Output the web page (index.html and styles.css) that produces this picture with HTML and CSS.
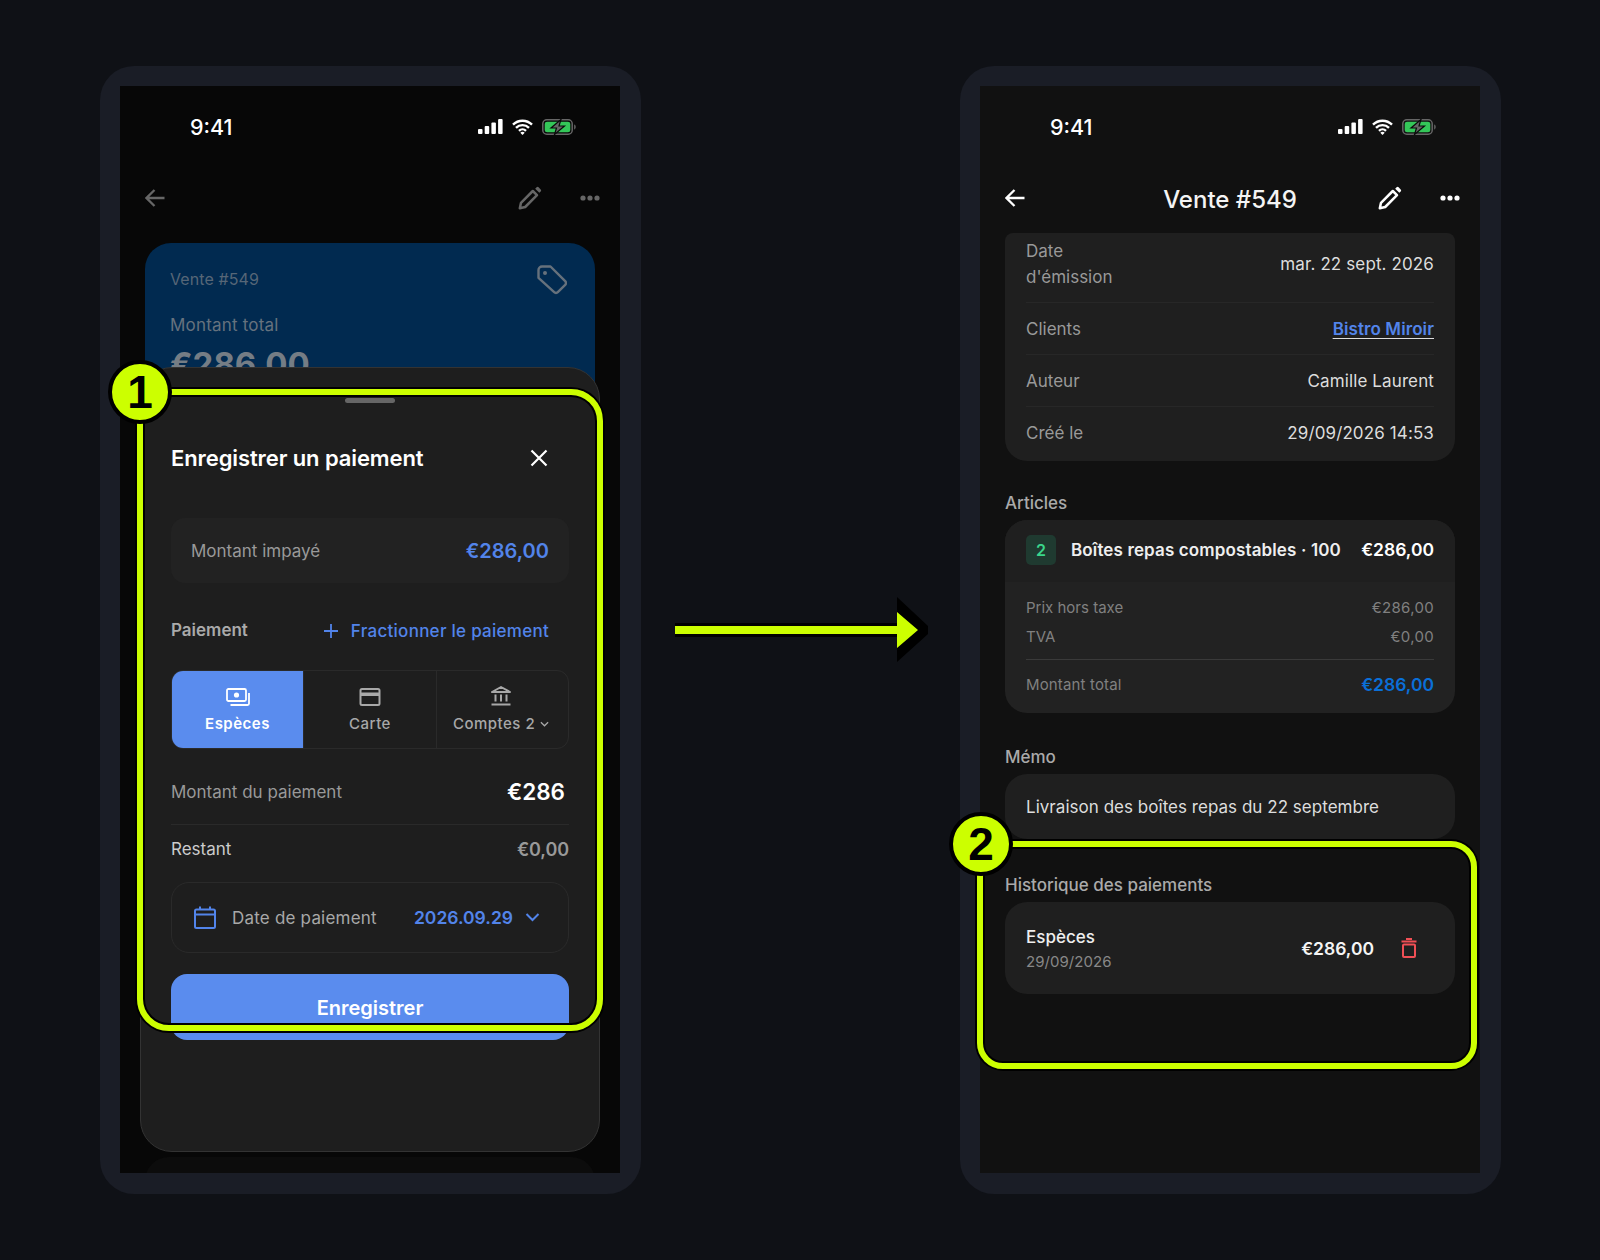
FILE: index.html
```html
<!DOCTYPE html>
<html lang="fr">
<head>
    <meta charset="UTF-8">
    <meta name="viewport" content="width=device-width, initial-scale=1.0">
    <title>Enregistrer un paiement</title>
    <link rel="stylesheet" href="styles.css">
</head>
<body>
    <svg class="defs" width="0" height="0">
        <symbol id="i-signal" viewBox="0 0 25 15">
            <rect x="0" y="10" width="4.5" height="5" rx="1" fill="currentColor"/>
            <rect x="6.7" y="7" width="4.5" height="8" rx="1" fill="currentColor"/>
            <rect x="13.4" y="3.5" width="4.5" height="11.5" rx="1" fill="currentColor"/>
            <rect x="20.1" y="0" width="4.5" height="15" rx="1" fill="currentColor"/>
        </symbol>
        <symbol id="i-wifi" viewBox="0 0 21 16">
            <path d="M1 5.600a13.500 13.500 0 0 1 19 0M4 8.800a9.200 9.200 0 0 1 13 0M7 11.800a5 5 0 0 1 7 0" fill="none" stroke="currentColor" stroke-width="2.400"/>
            <path d="M10.500 16l-2.200-2.200a3.100 3.100 0 0 1 4.400 0z" fill="currentColor"/>
        </symbol>
        <symbol id="i-battery" viewBox="0 0 34 16">
            <rect x="0.8" y="0.8" width="29.400" height="14.400" rx="4" fill="none" stroke="#666" stroke-width="1.500"/>
            <rect x="2.700" y="2.700" width="25.600" height="10.600" rx="2.400" fill="#34c759"/>
            <path d="M32 5.500c1.200.3 1.800 1.200 1.800 2.500s-.6 2.200-1.800 2.500z" fill="#555"/>
            <path d="M19 0.500L9 9h5.500l-2 6.500L22.500 7H17z" fill="#666" stroke="#0a0a0a" stroke-width="1.200"/>
        </symbol>
        <symbol id="i-back" viewBox="0 0 20 18">
            <path d="M19.500 9H1.500M9.500 1L1.500 9l8 8" fill="none" stroke="currentColor" stroke-width="2.300"/>
        </symbol>
        <symbol id="i-pencil" viewBox="0 0 24 24">
            <path d="M1.800 22.200l1.200-5.400L14.800 5l4.200 4.200L7.200 21z" fill="none" stroke="currentColor" stroke-width="2.500" stroke-linejoin="round"/>
            <path d="M17.200 2.700l1.400-1.400a1.400 1.400 0 0 1 2 0l2.100 2.100a1.400 1.400 0 0 1 0 2l-1.400 1.400z" fill="currentColor"/>
        </symbol>
        <symbol id="i-dots" viewBox="0 0 20 6">
            <circle cx="3" cy="3" r="2.600" fill="currentColor"/>
            <circle cx="10" cy="3" r="2.600" fill="currentColor"/>
            <circle cx="17" cy="3" r="2.600" fill="currentColor"/>
        </symbol>
    </svg>

    <div class="page">
        <section class="phone">
            <div class="screen screen-dim">
                <div class="status">
                    <span class="time">9:41</span>
                    <div class="status-icons">
                        <svg class="ic-signal"><use href="#i-signal"/></svg>
                        <svg class="ic-wifi"><use href="#i-wifi"/></svg>
                        <svg class="ic-battery"><use href="#i-battery"/></svg>
                    </div>
                </div>
                <div class="nav nav-dim">
                    <svg class="ic-back"><use href="#i-back"/></svg>
                    <span></span>
                    <div class="nav-actions">
                        <svg class="ic-pencil"><use href="#i-pencil"/></svg>
                        <svg class="ic-dots"><use href="#i-dots"/></svg>
                    </div>
                </div>
                <div class="sale-card">
                    <div class="sale-top">
                        <span class="sale-no">Vente #549</span>
                        <svg class="ic-tag" viewBox="0 0 30 30">
                            <path d="M1.500 5a3.500 3.500 0 0 1 3.500-3.500h8.500l14.700 14.700a2.500 2.500 0 0 1 0 3.600l-7.400 7.400a2.500 2.500 0 0 1-3.600 0L1.500 12.800z" fill="none" stroke="currentColor" stroke-width="2.400" stroke-linejoin="round"/>
                            <circle cx="8" cy="8" r="2" fill="currentColor"/>
                        </svg>
                    </div>
                    <div class="sale-label">Montant total</div>
                    <div class="sale-total">€286,00</div>
                </div>
                <div class="under-card"></div>

                <div class="sheet">
                    <div class="handle"></div>
                    <div class="sheet-head">
                        <h2>Enregistrer un paiement</h2>
                        <svg class="ic-close" viewBox="0 0 18 18">
                            <path d="M1.500 1.500l15 15M16.500 1.500l-15 15" fill="none" stroke="currentColor" stroke-width="2.200"/>
                        </svg>
                    </div>
                    <div class="due">
                        <span>Montant impayé</span>
                        <strong>€286,00</strong>
                    </div>
                    <div class="pay-head">
                        <span class="pay-title">Paiement</span>
                        <span class="split">
                            <svg class="ic-plus" viewBox="0 0 14 14">
                                <path d="M7 0v14M0 7h14" fill="none" stroke="currentColor" stroke-width="1.800"/>
                            </svg>
                            Fractionner le paiement
                        </span>
                    </div>
                    <div class="methods">
                        <div class="method active">
                            <svg class="ic-method" viewBox="0 0 24 18">
                                <rect x="1" y="1" width="19" height="12" rx="1.500" fill="none" stroke="currentColor" stroke-width="1.800"/>
                                <circle cx="10.500" cy="7" r="2.600" fill="currentColor"/>
                                <path d="M23 5v10.500a1.500 1.500 0 0 1-1.500 1.500H4.500" fill="none" stroke="currentColor" stroke-width="1.800"/>
                            </svg>
                            <span>Espèces</span>
                        </div>
                        <div class="method">
                            <svg class="ic-method" viewBox="0 0 24 18">
                                <rect x="2.500" y="1" width="19" height="16" rx="1.500" fill="none" stroke="currentColor" stroke-width="2"/>
                                <rect x="2.500" y="4.500" width="19" height="3.500" fill="currentColor"/>
                            </svg>
                            <span>Carte</span>
                        </div>
                        <div class="method method-more">
                            <svg class="ic-method ic-bank" viewBox="0 -2 24 20">
                                <path d="M12 -1L3 4h18z" fill="none" stroke="currentColor" stroke-width="2" stroke-linejoin="round"/>
                                <path d="M6.500 6.500v7M12 6.500v7M17.500 6.500v7" fill="none" stroke="currentColor" stroke-width="2"/>
                                <path d="M2.500 16.500h19" fill="none" stroke="currentColor" stroke-width="2.200"/>
                            </svg>
                            <span>Comptes 2
                                <svg class="ic-mini" viewBox="0 0 10 6">
                                    <path d="M1 1l4 4 4-4" fill="none" stroke="currentColor" stroke-width="1.400"/>
                                </svg>
                            </span>
                        </div>
                    </div>
                    <div class="amount-row">
                        <span>Montant du paiement</span>
                        <strong>€286</strong>
                    </div>
                    <div class="rest-row">
                        <span>Restant</span>
                        <strong>€0,00</strong>
                    </div>
                    <div class="date-box">
                        <svg class="ic-cal" viewBox="0 0 22 23">
                            <path d="M2.500 3.500h17a1.500 1.500 0 0 1 1.500 1.500v15.500a1.500 1.500 0 0 1-1.500 1.500h-17A1.500 1.500 0 0 1 1 20.500V5a1.500 1.500 0 0 1 1.500-1.500zM1 8.500h20M6 0.500v3M16 0.500v3" fill="none" stroke="currentColor" stroke-width="2"/>
                        </svg>
                        <span class="date-label">Date de paiement</span>
                        <span class="date-value">2026.09.29</span>
                        <svg class="ic-chev" viewBox="0 0 14 9">
                            <path d="M1 1l6 6 6-6" fill="none" stroke="currentColor" stroke-width="2"/>
                        </svg>
                    </div>
                    <button class="save">Enregistrer</button>
                </div>
            </div>
        </section>

        <section class="phone">
            <div class="screen">
                <div class="status">
                    <span class="time">9:41</span>
                    <div class="status-icons">
                        <svg class="ic-signal"><use href="#i-signal"/></svg>
                        <svg class="ic-wifi"><use href="#i-wifi"/></svg>
                        <svg class="ic-battery"><use href="#i-battery"/></svg>
                    </div>
                </div>
                <div class="nav">
                    <svg class="ic-back"><use href="#i-back"/></svg>
                    <span class="nav-title">Vente #549</span>
                    <div class="nav-actions">
                        <svg class="ic-pencil"><use href="#i-pencil"/></svg>
                        <svg class="ic-dots"><use href="#i-dots"/></svg>
                    </div>
                </div>
                <div class="detail">
                    <div class="card info">
                        <div class="info-row first">
                            <span>Date<br>d'émission</span>
                            <em>mar. 22 sept. 2026</em>
                        </div>
                        <div class="info-row">
                            <span>Clients</span>
                            <a class="client">Bistro Miroir</a>
                        </div>
                        <div class="info-row">
                            <span>Auteur</span>
                            <em>Camille Laurent</em>
                        </div>
                        <div class="info-row">
                            <span>Créé le</span>
                            <em>29/09/2026 14:53</em>
                        </div>
                    </div>

                    <h3 class="section-title articles-title">Articles</h3>
                    <div class="card items">
                        <div class="item">
                            <span class="qty">2</span>
                            <span class="item-name">Boîtes repas compostables · 100</span>
                            <strong>€286,00</strong>
                        </div>
                        <div class="totals">
                            <div class="total-row"><span>Prix hors taxe</span><span class="num">€286,00</span></div>
                            <div class="total-row"><span>TVA</span><span class="num">€0,00</span></div>
                            <div class="grand-row"><span>Montant total</span><strong>€286,00</strong></div>
                        </div>
                    </div>

                    <h3 class="section-title memo-title">Mémo</h3>
                    <div class="card memo">Livraison des boîtes repas du 22 septembre</div>

                    <h3 class="section-title history-title">Historique des paiements</h3>
                    <div class="card history">
                        <div class="history-info">
                            <div class="history-name">Espèces</div>
                            <div class="history-date">29/09/2026</div>
                        </div>
                        <strong>€286,00</strong>
                        <svg class="ic-trash" viewBox="0 0 16 20">
                            <path d="M0.500 3.500h15M5 1h6" fill="none" stroke="currentColor" stroke-width="2"/>
                            <rect x="2" y="6.500" width="12" height="12.500" rx="1" fill="none" stroke="currentColor" stroke-width="2"/>
                        </svg>
                    </div>
                </div>
            </div>
        </section>

        <!-- annotations over the two phones -->
        <div class="frame-mark mark-one"></div>
        <div class="frame-mark mark-two"></div>
        <div class="step step-one">1</div>
        <div class="step step-two">2</div>
        <svg class="flow-arrow" viewBox="0 0 265 80" width="265" height="80">
            <path d="M5 33H227V7L258 36V44L227 72V47H5z" fill="#000"/>
            <path d="M5 36H227V22L248 40 227 58V44H5z" fill="#ccff00"/>
        </svg>
    </div>
</body>
</html>
```

FILE: styles.css
```css
* {
    box-sizing: border-box;
}
body {
    margin: 0;
    background: #0f1116;
    font-family: Inter, "Liberation Sans", sans-serif;
    color: #ddd;
}
h2, h3 {
    margin: 0;
}
em {
    font-style: normal;
}
.defs {
    position: absolute;
}
svg {
    display: block;
}
.page {
    position: relative;
    width: 1600px;
    height: 1260px;
    padding: 66px 0 0 100px;
    display: flex;
    gap: 319px;
}
.phone {
    width: 541px;
    height: 1128px;
    padding: 20px 21px 21px 20px;
    background: #1a1d26;
    border-radius: 34px;
}
.screen {
    position: relative;
    height: 100%;
    background: #111;
    overflow: hidden;
    display: flex;
    flex-direction: column;
}
.screen-dim {
    background: #070707;
}

/* status bar */
.status {
    height: 81px;
    flex-shrink: 0;
    display: flex;
    align-items: center;
    justify-content: space-between;
    padding: 0 44px 0 70px;
}
.time {
    font-size: 21.5px;
    font-weight: 500;
    color: #fff;
}
.status-icons {
    display: flex;
    align-items: center;
    gap: 9px;
    color: #fff;
}
.ic-signal {
    width: 25px;
    height: 15px;
}
.ic-wifi {
    width: 21px;
    height: 16px;
}
.ic-battery {
    width: 34px;
    height: 16px;
}

/* nav */
.nav {
    height: 62px;
    flex-shrink: 0;
    display: grid;
    grid-template-columns: 1fr auto 1fr;
    align-items: center;
    padding: 0 20px;
    color: #fff;
}
.nav-dim {
    color: #666;
}
.ic-back {
    width: 20px;
    height: 18px;
    margin-left: 5px;
}
.nav-title {
    padding-top: 2px;
    font-size: 24px;
    font-weight: 500;
    color: #f4f4f4;
}
.nav-actions {
    display: flex;
    align-items: center;
    justify-content: flex-end;
    gap: 38px;
}
.ic-pencil {
    width: 24px;
    height: 24px;
}
.ic-dots {
    width: 20px;
    height: 6px;
}

/* left phone, behind the sheet */
.sale-card {
    height: 300px;
    margin: 14px 25px 0;
    padding: 21px 25px;
    background: #012a50;
    border-radius: 26px;
}
.sale-top {
    display: flex;
    align-items: center;
    justify-content: space-between;
    height: 30px;
    padding-right: 3px;
    color: #66717c;
}
.sale-no {
    font-size: 16px;
    letter-spacing: 0.1px;
    color: #566677;
}
.ic-tag {
    width: 30px;
    height: 30px;
    margin-top: 1px;
}
.sale-label {
    margin-top: 21px;
    font-size: 17px;
    letter-spacing: 0.2px;
    color: #66727e;
}
.sale-total {
    margin-top: 9px;
    font-size: 33px;
    font-weight: 700;
    color: #757d85;
}
.under-card {
    height: 60px;
    margin: auto 25px -44px;
    background: #0c0c0c;
    border-radius: 24px;
}
.sheet {
    position: absolute;
    left: 20px;
    top: 281px;
    width: 460px;
    height: 785px;
    padding: 0 30px;
    background: #1e1e1e;
    border: 1px solid #333;
    border-radius: 32px;
}
.handle {
    width: 50px;
    height: 5px;
    margin: 30px auto 0;
    background: #666;
    border-radius: 3px;
}
.sheet-head {
    height: 30px;
    margin-top: 40px;
    display: flex;
    align-items: center;
    justify-content: space-between;
    padding-right: 21px;
    color: #fff;
}
.sheet-head h2 {
    font-size: 22px;
    font-weight: 600;
    letter-spacing: -0.1px;
}
.ic-close {
    width: 18px;
    height: 18px;
}
.due {
    height: 65px;
    margin-top: 45px;
    padding: 0 20px;
    display: flex;
    align-items: center;
    justify-content: space-between;
    background: #222;
    border-radius: 14px;
    font-size: 17px;
    color: #999;
}
.due strong {
    font-size: 20px;
    font-weight: 600;
    color: #5284ea;
}
.pay-head {
    height: 25px;
    margin-top: 35px;
    display: flex;
    align-items: center;
    justify-content: space-between;
    padding-right: 20px;
    font-size: 17px;
}
.pay-title {
    margin-top: -2px;
    font-weight: 600;
    color: #aaa;
}
.split {
    display: flex;
    align-items: center;
    gap: 13px;
    font-weight: 500;
    letter-spacing: 0.27px;
    color: #5284ea;
}
.ic-plus {
    width: 14px;
    height: 14px;
}
.methods {
    height: 79px;
    margin-top: 27px;
    display: grid;
    grid-template-columns: 131px 133px 1fr;
    border: 1px solid #2a2a2a;
    border-radius: 12px;
    overflow: hidden;
}
.method {
    display: flex;
    flex-direction: column;
    align-items: center;
    gap: 8px;
    padding-top: 17px;
    font-size: 15px;
    font-weight: 500;
    letter-spacing: 0.5px;
    color: #a8a8a8;
    border-left: 1px solid #2a2a2a;
}
.method span {
    display: flex;
    align-items: center;
    gap: 5px;
}
.method.active {
    background: #5a8cee;
    color: #fff;
    font-weight: 600;
    border-left: 0;
}
.method-more {
    padding-right: 3px;
}
.ic-method {
    width: 24px;
    height: 18px;
}
.ic-bank {
    height: 20px;
    margin-top: -2px;
}
.ic-mini {
    width: 9px;
    height: 6px;
}
.amount-row {
    height: 66px;
    margin-top: 10px;
    display: flex;
    align-items: center;
    justify-content: space-between;
    padding-right: 4px;
    border-bottom: 1px solid #2a2a2a;
    font-size: 17px;
    color: #999;
}
.amount-row strong {
    font-size: 22.5px;
    font-weight: 600;
    color: #fff;
}
.rest-row {
    height: 47px;
    padding-top: 1px;
    display: flex;
    align-items: center;
    justify-content: space-between;
    font-size: 17px;
    color: #ccc;
}
.rest-row strong {
    font-size: 18px;
    font-weight: 600;
    letter-spacing: -0.1px;
    color: #999;
}
.date-box {
    height: 71px;
    margin-top: 10px;
    padding: 0 28px 0 22px;
    display: flex;
    align-items: center;
    border: 1px solid #2a2a2a;
    border-radius: 18px;
    color: #5284ea;
}
.ic-cal {
    width: 22px;
    height: 23px;
}
.date-label {
    margin-left: 16px;
    font-size: 17px;
    letter-spacing: 0.2px;
    color: #a8a8a8;
}
.date-value {
    margin-left: auto;
    font-size: 17.5px;
    font-weight: 600;
}
.ic-chev {
    width: 15px;
    height: 9px;
    margin-left: 12px;
}
.save {
    display: block;
    width: 100%;
    height: 66px;
    margin-top: 21px;
    padding: 2px 0 0;
    border: 0;
    background: #5a8cee;
    border-radius: 16px;
    font-family: inherit;
    font-size: 20px;
    font-weight: 600;
    color: #fff;
}

/* right phone */
.detail {
    padding: 4px 25px 0;
}
.card {
    background: #1f1f1f;
    border-radius: 22px;
}
.info {
    padding: 0 21px;
    border-radius: 8px 8px 22px 22px;
}
.info-row {
    height: 52px;
    display: flex;
    align-items: center;
    justify-content: space-between;
    border-bottom: 1px solid #272727;
    font-size: 17px;
    color: #999;
}
.info-row:last-child {
    height: 54px;
    padding-bottom: 2px;
    border-bottom: 0;
}
.info-row.first {
    height: 70px;
    padding-bottom: 8px;
    line-height: 26px;
}
.info-row em {
    letter-spacing: 0.12px;
    color: #ddd;
}
.client {
    font-weight: 600;
    letter-spacing: 0.1px;
    color: #5284ea;
    text-decoration: underline;
    text-decoration-color: #ddd;
    text-underline-offset: 3px;
}
.section-title {
    height: 24px;
    font-size: 17px;
    font-weight: 500;
    line-height: 24px;
    color: #aaa;
}
.articles-title {
    margin: 30px 0 5px;
}
.memo-title {
    margin: 32px 0 5px;
}
.history-title {
    margin: 34px 0 5px;
}
.items {
    background: #222;
    overflow: hidden;
}
.item {
    height: 62px;
    padding: 0 21px 3px;
    display: flex;
    align-items: center;
    background: #1f1f1f;
    font-size: 17px;
    font-weight: 600;
    color: #eee;
}
.item-name {
    letter-spacing: 0.13px;
}
.qty {
    width: 30px;
    height: 30px;
    margin-right: 15px;
    background: #1f3a30;
    border-radius: 5px;
    font-size: 16px;
    font-weight: 600;
    line-height: 30px;
    text-align: center;
    color: #3ad68a;
}
.item strong {
    margin-left: auto;
    font-size: 17.5px;
    font-weight: 600;
    color: #fff;
}
.totals {
    padding: 11px 21px 0;
    font-size: 15px;
    color: #808080;
}
.total-row {
    height: 29px;
    display: flex;
    align-items: center;
    justify-content: space-between;
}
.total-row .num {
    letter-spacing: 0.3px;
}
.total-row:nth-child(2) {
    margin-bottom: 8px;
}
.grand-row {
    height: 54px;
    padding-bottom: 5px;
    display: flex;
    align-items: center;
    justify-content: space-between;
    border-top: 1px solid #3a3a3a;
    letter-spacing: 0.15px;
}
.grand-row strong {
    font-size: 17.5px;
    font-weight: 600;
    letter-spacing: 0;
    color: #0a6fd8;
}
.memo {
    height: 65px;
    padding: 1px 21px 0;
    display: flex;
    align-items: center;
    font-size: 17px;
    letter-spacing: 0.03px;
    color: #ddd;
}
.history {
    height: 92px;
    padding: 0 38px 0 21px;
    display: flex;
    align-items: center;
}
.history-info {
    margin: 2px auto 0 0;
}
.history-name {
    font-size: 17px;
    font-weight: 500;
    color: #eee;
}
.history-date {
    margin-top: 5px;
    font-size: 15px;
    letter-spacing: 0.05px;
    color: #888;
}
.history strong {
    font-size: 17.5px;
    font-weight: 600;
    color: #f4f4f4;
}
.ic-trash {
    width: 16px;
    height: 20px;
    margin-left: 27px;
    color: #f04f55;
}

/* annotations */
.frame-mark {
    position: absolute;
    border: 6px solid #ccff00;
    box-shadow: 0 0 0 2px #000, inset 0 0 0 2px #000;
}
.mark-one {
    left: 137px;
    top: 389px;
    width: 466px;
    height: 642px;
    border-radius: 32px;
}
.mark-two {
    left: 977px;
    top: 841px;
    width: 500px;
    height: 228px;
    border-radius: 26px;
}
.step {
    position: absolute;
    width: 64px;
    height: 64px;
    background: #ccff00;
    border: 4px solid #000;
    border-radius: 50%;
    font-family: "Liberation Sans", Arial, sans-serif;
    font-size: 46px;
    font-weight: 700;
    line-height: 56px;
    text-align: center;
    color: #000;
}
.step-one {
    left: 108px;
    top: 360px;
}
.step-two {
    left: 949px;
    top: 812px;
}
.flow-arrow {
    position: absolute;
    left: 670px;
    top: 590px;
}
```
